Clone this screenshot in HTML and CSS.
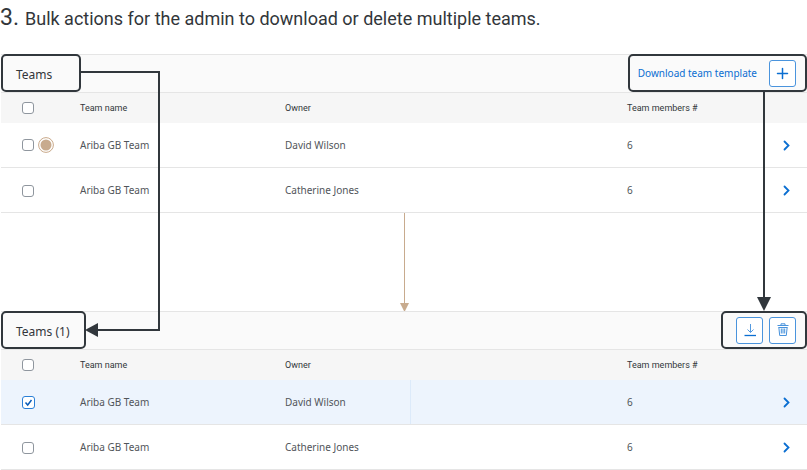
FILE: index.html
```html
<!DOCTYPE html>
<html lang="en">
<head>
<meta charset="utf-8">
<title>Bulk actions for teams</title>
<link rel="stylesheet" href="styles.css">
</head>
<body>
<main class="board">
  <h1 class="title"><span class="step">3.</span> Bulk actions for the admin to download or delete multiple teams.</h1>

  <section class="panel">
    <div class="toolbar">
      <h2 class="callout callout-title">Teams</h2>
      <div class="callout callout-actions">
        <a class="link" href="#">Download team template</a>
        <button class="icon-button" type="button" aria-label="Add team">
          <svg width="13" height="13" viewBox="0 0 13 13"><path d="M6.500 1.500v10M1.500 6.500h10" fill="none" stroke="currentColor" stroke-width="1.500" stroke-linecap="round"/></svg>
        </button>
      </div>
    </div>
    <table class="teams">
      <thead>
        <tr><th class="col-check"><input class="check" type="checkbox" aria-label="Select all teams"></th><th class="col-name">Team name</th><th class="col-owner">Owner</th><th>Team members #</th><th class="col-nav"></th></tr>
      </thead>
      <tbody>
        <tr><td class="col-check"><input class="check" type="checkbox" aria-label="Select David Wilson's team"><svg class="hotspot" width="16" height="16" viewBox="0 0 16 16"><circle cx="8" cy="8" r="7.400" fill="#fff" stroke="#c9a98a"/><circle cx="8" cy="8" r="5.500" fill="#c8ab8e"/></svg></td><td>Ariba GB Team</td><td>David Wilson</td><td>6</td><td class="col-nav"><a class="next" href="#" aria-label="Open team"><svg width="10" height="12" viewBox="0 0 10 12"><path d="M2.500 2.500 6.500 6.500 2.500 10.500" fill="none" stroke="currentColor" stroke-width="1.800" stroke-linecap="round"/></svg></a></td></tr>
        <tr><td class="col-check"><input class="check" type="checkbox" aria-label="Select Catherine Jones's team"></td><td>Ariba GB Team</td><td>Catherine Jones</td><td>6</td><td class="col-nav"><a class="next" href="#" aria-label="Open team"><svg width="10" height="12" viewBox="0 0 10 12"><path d="M2.500 2.500 6.500 6.500 2.500 10.500" fill="none" stroke="currentColor" stroke-width="1.800" stroke-linecap="round"/></svg></a></td></tr>
      </tbody>
    </table>
  </section>

  <div class="flow">
    <svg width="9" height="98" viewBox="0 0 9 98"><path d="M4.500 0v92" stroke="#c8ab8e"/><path d="M0 90h9l-4.500 9z" fill="#c8ab8e"/></svg>
  </div>

  <section class="panel">
    <div class="toolbar">
      <h2 class="callout callout-title">Teams (1)</h2>
      <div class="callout callout-actions">
        <button class="icon-button" type="button" aria-label="Download">
          <svg width="14" height="14" viewBox="0 0 14 14" fill="none" stroke="currentColor"><path d="M7.500 1v8M4.500 6.500l3 3 3-3" opacity=".7"/><path d="M1.500 12.500h11.500" stroke-width="1.300"/></svg>
        </button>
        <button class="icon-button" type="button" aria-label="Delete">
          <svg width="14" height="14" viewBox="0 0 14 14" fill="none" stroke="currentColor" opacity=".75"><path d="M1.500 2.500h11M5 2V.800h4V2M2.800 4.500h8.400M2.800 4l.9 8.500h6.600l.9-8.500M5.300 5.500v5M7 5.500v5M8.700 5.500v5"/></svg>
        </button>
      </div>
    </div>
    <table class="teams">
      <thead>
        <tr><th class="col-check"><input class="check" type="checkbox" aria-label="Select all teams"></th><th class="col-name">Team name</th><th class="col-owner">Owner</th><th>Team members #</th><th class="col-nav"></th></tr>
      </thead>
      <tbody>
        <tr class="selected"><td class="col-check"><input class="check" type="checkbox" checked aria-label="Select David Wilson's team"></td><td>Ariba GB Team</td><td class="owner-split">David Wilson</td><td>6</td><td class="col-nav"><a class="next" href="#" aria-label="Open team"><svg width="10" height="12" viewBox="0 0 10 12"><path d="M2.500 2.500 6.500 6.500 2.500 10.500" fill="none" stroke="currentColor" stroke-width="1.800" stroke-linecap="round"/></svg></a></td></tr>
        <tr><td class="col-check"><input class="check" type="checkbox" aria-label="Select Catherine Jones's team"></td><td>Ariba GB Team</td><td>Catherine Jones</td><td>6</td><td class="col-nav"><a class="next" href="#" aria-label="Open team"><svg width="10" height="12" viewBox="0 0 10 12"><path d="M2.500 2.500 6.500 6.500 2.500 10.500" fill="none" stroke="currentColor" stroke-width="1.800" stroke-linecap="round"/></svg></a></td></tr>
      </tbody>
    </table>
  </section>

  <svg class="connector connector-left" width="80" height="270" viewBox="0 0 80 270"><path d="M0 5h78v258H12" fill="none" stroke="#31373c" stroke-width="2"/><path d="M4 263l13-7v14z" fill="#31373c"/></svg>
  <svg class="connector connector-right" width="14" height="220" viewBox="0 0 14 220"><path d="M7 0v210" stroke="#31373c" stroke-width="2"/><path d="M0 206h14l-7 14z" fill="#31373c"/></svg>
</main>
</body>
</html>
```
FILE: styles.css
```css
* {
  box-sizing: border-box;
}

body {
  margin: 0;
  background: #fff;
  color: #32363a;
  font-family: "Noto Sans", sans-serif;
  font-size: 10px;
}

.board {
  position: relative;
}

.title {
  display: flex;
  align-items: baseline;
  gap: 6px;
  height: 54px;
  margin: 0;
  font-family: Roboto, sans-serif;
  font-size: 18px;
  font-weight: 400;
  line-height: 36px;
  white-space: nowrap;
}

.step {
  font-size: 23px;
}

.panel {
  margin-left: 1px;
}

.toolbar {
  display: flex;
  align-items: flex-start;
  justify-content: space-between;
  height: 39px;
  border-top: 1px solid #e5e5e5;
  border-bottom: 1px solid #e5e5e5;
  background: #fafafa;
}

.callout {
  display: flex;
  align-items: center;
  height: 38px;
  margin: -1px 0 0;
  border: 2px solid #31373c;
  border-radius: 5px;
}

.callout-title {
  min-width: 80px;
  padding: 2px 15px 0 13px;
  font-size: 12px;
  font-weight: 400;
}

.callout-actions {
  gap: 6px;
  padding: 0 9px 0 8px;
}

.callout-actions .icon-button:first-child {
  margin-left: 5px;
}

.link {
  margin-right: 6px;
  color: #0a6ed1;
  text-decoration: none;
}

.icon-button {
  display: flex;
  align-items: center;
  justify-content: center;
  width: 27px;
  height: 27px;
  padding: 0;
  border: 1px solid #4a94dd;
  border-radius: 3px;
  background: #fff;
  color: #0a6ed1;
}

.teams {
  width: 100%;
  border-spacing: 0;
  table-layout: fixed;
}

th,
td {
  padding: 0;
  text-align: left;
}

th {
  height: 30px;
  background: #f6f6f6;
  font-family: Roboto, sans-serif;
  font-size: 9px;
  font-weight: 400;
}

td {
  height: 45px;
  border-bottom: 1px solid #e5e5e5;
  color: #51555a;
}

.col-check {
  width: 79px;
  padding-left: 21px;
}

.col-name {
  width: 205px;
}

.col-owner {
  width: 342px;
}

.col-nav {
  width: 25px;
}

.check {
  appearance: none;
  display: inline-block;
  width: 12px;
  height: 12px;
  margin: 0;
  border: 1px solid #8f969e;
  border-radius: 3px;
  background: #fff;
  vertical-align: middle;
}

.check:checked {
  width: 13px;
  height: 13px;
  border-color: #2a7fd6;
  background: #fff url("data:image/svg+xml,%3Csvg xmlns='http://www.w3.org/2000/svg' viewBox='0 0 11 11'%3E%3Cpath d='M2.500 5.500l2.200 2.500L8.500 3' fill='none' stroke='%230a5cb8' stroke-width='1.500'/%3E%3C/svg%3E") center / 11px no-repeat;
}

.hotspot {
  margin-left: 4px;
  vertical-align: middle;
}

.next {
  display: block;
  color: #0a6ed1;
}

.next svg {
  display: block;
}

.selected td {
  background-color: #edf4fd;
}

.selected .owner-split {
  background-image: linear-gradient(to right, transparent 125px, #dceafa 125px, #dceafa 126px, transparent 126px);
}

.flow {
  display: flex;
  justify-content: center;
  height: 98px;
  padding-left: 2px;
}

.connector {
  position: absolute;
}

.connector-left {
  top: 67px;
  left: 81px;
}

.connector-right {
  top: 91px;
  right: 36px;
}
```
